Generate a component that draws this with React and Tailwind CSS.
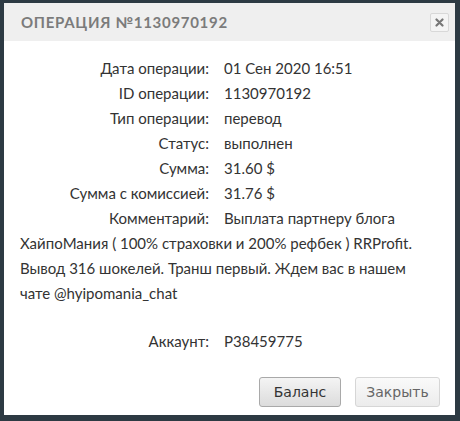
import React from "react";

const rows = [
  ["Дата операции:", "01 Сен 2020 16:51"],
  ["ID операции:", "1130970192"],
  ["Тип операции:", "перевод"],
  ["Статус:", "выполнен"],
  ["Сумма:", "31.60 $"],
  ["Сумма с комиссией:", "31.76 $"],
];

export default function App() {
  return (
    <div className="w-[460px] h-[421px] bg-[#2d3a43] pt-[3px] pl-[4px] pr-[5px] pb-[6px]">
      <div className="w-[451px] h-[412px] bg-white flex flex-col" style={{ fontFamily: "Lato, sans-serif" }}>
        <div className="h-[38px] bg-[#efefef] flex items-center justify-between pl-[17px] pr-[6px]">
          <div className="text-[15px] font-bold tracking-[0.7px] text-[#7b7b7b]">ОПЕРАЦИЯ №1130970192</div>
          <div className="w-[19px] h-[19px] border border-[#d8d8d8] rounded-[2px] bg-[#f4f4f4] flex items-center justify-center">
            <svg width="9" height="9" viewBox="0 0 9 9">
              <path d="M1.5 1.5L7.5 7.5M7.5 1.5L1.5 7.5" stroke="#777" strokeWidth="2.2" strokeLinecap="round" />
            </svg>
          </div>
        </div>
        <div className="pt-[15px] pl-[16px] pr-[16px] text-[15px] text-[#333] leading-[25px] flex-1">
          {rows.map(([l, v]) => (
            <div key={l} className="flex">
              <div className="w-[189px] text-right">{l}</div>
              <div className="ml-[15px]">{v}</div>
            </div>
          ))}
          <p>
            <span className="inline-block w-[204px] pr-[15px] text-right">Комментарий:</span>
            Выплата партнеру блога ХайпоМания ( 100% страховки и 200% рефбек ) RRProfit. Вывод 316 шокелей. Транш первый. Ждем вас в нашем чате @hyipomania_chat
          </p>
          <div className="flex mt-[23px]">
            <div className="w-[189px] text-right">Аккаунт:</div>
            <div className="ml-[15px]">P38459775</div>
          </div>
        </div>
        <div className="flex justify-end gap-[14px] pr-[15px] pb-[8px]" style={{ fontFamily: "'DejaVu Sans', sans-serif" }}>
          <button className="w-[82px] h-[30px] rounded-[3px] border border-[#a9a9a9] bg-gradient-to-b from-[#f4f4f4] to-[#dcdcdc] text-[14px] text-[#333]">Баланс</button>
          <button className="w-[85px] h-[30px] rounded-[3px] border border-[#d6d6d6] bg-gradient-to-b from-[#fafafa] to-[#ececec] text-[14px] text-[#666]">Закрыть</button>
        </div>
      </div>
    </div>
  );
}
